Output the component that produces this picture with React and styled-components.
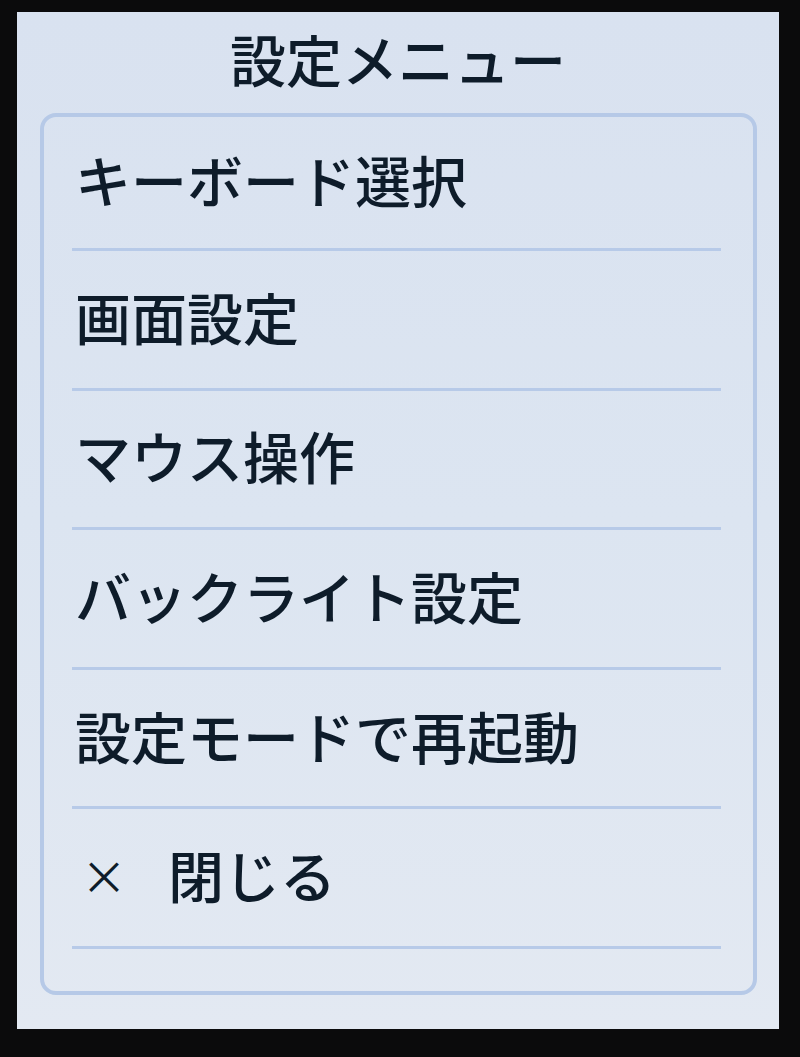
import React from "react"
import styled, { createGlobalStyle } from "styled-components"

const GlobalStyle = createGlobalStyle`
  html, body {
    margin: 0;
    padding: 0;
    background: #0b0b0c;
  }
  body {
    font-family: "Noto Sans CJK JP", "Noto Sans", sans-serif;
  }
`

const Frame = styled.div`
  width: 800px;
  height: 1057px;
  background: #0b0b0c;
  padding: 12px 21px 28px 17px;
  box-sizing: border-box;
`

const Screen = styled.div`
  height: 100%;
  display: flex;
  flex-direction: column;
  background: linear-gradient(180deg, #d9e2f0 0%, #dce5f1 50%, #e3e9f2 100%);
  box-sizing: border-box;
`

const Title = styled.div`
  height: 101px;
  line-height: 92px;
  text-align: center;
  font-size: 56px;
  font-weight: 500;
  color: #0e1c2a;
`

const Card = styled.div`
  margin: 0 22px 0 23px;
  height: 882px;
  border: 4px solid #b6c9e7;
  border-radius: 16px;
  box-sizing: border-box;
  display: flex;
  flex-direction: column;
`

const Row = styled.div`
  height: ${(props) => (props.first ? "131px" : "136.6px")};
  display: flex;
  align-items: center;
  padding: 0 0 8px 31px;
  box-sizing: border-box;
  font-size: 56px;
  font-weight: 500;
  color: #0e1c2a;
  white-space: nowrap;
`

const Divider = styled.div`
  height: 3px;
  margin: 0 32px 0 28px;
  background: #b7cae8;
  flex-shrink: 0;
`

const CloseMark = styled.span`
  display: inline-block;
  width: 93px;
  font-size: 46px;
  font-weight: 400;
  padding-left: 6px;
  box-sizing: border-box;
`

const items = [
  "キーボード選択",
  "画面設定",
  "マウス操作",
  "バックライト設定",
  "設定モードで再起動",
]

export default function App() {
  return (
    <Frame>
      <GlobalStyle />
      <Screen>
        <Title>設定メニュー</Title>
        <Card>
          {items.map((label, i) => (
            <React.Fragment key={label}>
              <Row first={i === 0}>{label}</Row>
              <Divider />
            </React.Fragment>
          ))}
          <Row>
            <CloseMark>×</CloseMark>閉じる
          </Row>
          <Divider />
        </Card>
      </Screen>
    </Frame>
  )
}
